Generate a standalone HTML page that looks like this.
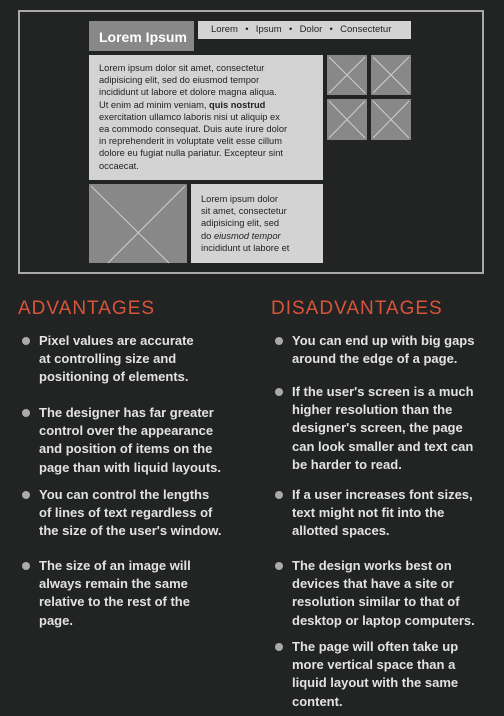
<!DOCTYPE html>
<html><head><style>
body{margin:0;width:504px;height:716px;background:#222323;position:relative;overflow:hidden;font-family:"Liberation Sans",sans-serif}
.a{position:absolute;box-sizing:border-box}
.frame{left:18px;top:10px;width:466px;height:264px;border:2px solid #a9a9a9}
.g{background:#888}
.l{background:#d3d3d3}
.tx{font-size:9.3px;line-height:12.2px;color:#222;white-space:nowrap}
svg{position:absolute;left:0;top:0}
h2{position:absolute;margin:0;font-size:19px;font-weight:normal;color:#d9553a;letter-spacing:1px;top:298px}
.it{position:absolute;font-size:13px;font-weight:bold;line-height:18.2px;color:#e2e2e2;white-space:nowrap}
.it:before{content:"";position:absolute;left:-17px;top:5px;width:8px;height:8px;border-radius:50%;background:#aaa}
</style></head><body>
<div class="a frame"></div>
<div class="a g" style="left:89px;top:21px;width:105px;height:30px"></div>
<div class="a" style="left:99px;top:29px;color:#fff;font-size:14px;font-weight:bold">Lorem Ipsum</div>
<div class="a l" style="left:198px;top:21px;width:213px;height:18px"></div>
<div class="a" style="left:211px;top:24px;font-size:9.5px;color:#222;word-spacing:1px">Lorem &nbsp;•&nbsp; Ipsum &nbsp;•&nbsp; Dolor &nbsp;•&nbsp; Consectetur</div>
<div class="a l tx" style="left:89px;top:55px;width:234px;height:125px;padding:7px 0 0 10px">Lorem ipsum dolor sit amet, consectetur<br>adipisicing elit, sed do eiusmod tempor<br>incididunt ut labore et dolore magna aliqua.<br>Ut enim ad minim veniam, <b>quis nostrud</b><br>exercitation ullamco laboris nisi ut aliquip ex<br>ea commodo consequat. Duis aute irure dolor<br>in reprehenderit in voluptate velit esse cillum<br>dolore eu fugiat nulla pariatur. Excepteur sint<br>occaecat.</div>
<div class="a l tx" style="left:191px;top:184px;width:132px;height:79px;padding:9px 0 0 10px">Lorem ipsum dolor<br>sit amet, consectetur<br>adipisicing elit, sed<br>do <i>eiusmod tempor</i><br>incididunt ut labore et</div>
<svg width="504" height="280">
<g fill="#888"><rect x="327" y="55" width="40" height="40"/><rect x="371" y="55" width="40" height="40"/><rect x="327" y="99" width="40" height="41"/><rect x="371" y="99" width="40" height="41"/><rect x="89" y="184" width="98" height="79"/></g>
<g stroke="#cfcfcf" stroke-width="1"><path d="M329 57L365 93M365 57L329 93M373 57L409 93M409 57L373 93M329 101L365 138M365 101L329 138M373 101L409 138M409 101L373 138M91 186L169 263M185 186L108 263"/></g>
</svg>
<h2 style="left:18px">ADVANTAGES</h2>
<h2 style="left:271px">DISADVANTAGES</h2>
<div class="it" style="left:39px;top:332px">Pixel values are accurate<br>at controlling size and<br>positioning of elements.</div>
<div class="it" style="left:39px;top:404px">The designer has far greater<br>control over the appearance<br>and position of items on the<br>page than with liquid layouts.</div>
<div class="it" style="left:39px;top:486px">You can control the lengths<br>of lines of text regardless of<br>the size of the user's window.</div>
<div class="it" style="left:39px;top:557px">The size of an image will<br>always remain the same<br>relative to the rest of the<br>page.</div>
<div class="it" style="left:292px;top:332px">You can end up with big gaps<br>around the edge of a page.</div>
<div class="it" style="left:292px;top:383px">If the user's screen is a much<br>higher resolution than the<br>designer's screen, the page<br>can look smaller and text can<br>be harder to read.</div>
<div class="it" style="left:292px;top:486px">If a user increases font sizes,<br>text might not fit into the<br>allotted spaces.</div>
<div class="it" style="left:292px;top:557px">The design works best on<br>devices that have a site or<br>resolution similar to that of<br>desktop or laptop computers.</div>
<div class="it" style="left:292px;top:638px">The page will often take up<br>more vertical space than a<br>liquid layout with the same<br>content.</div>
</body></html>
